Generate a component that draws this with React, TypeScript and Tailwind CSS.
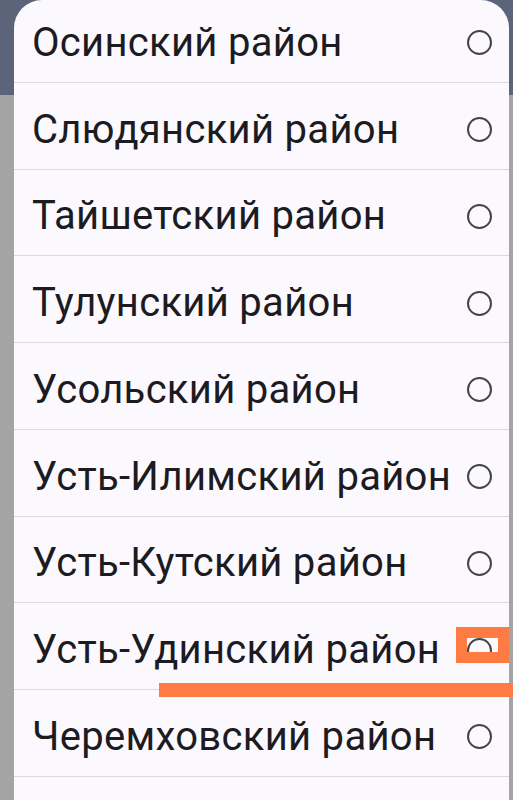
const districts = [
  'Осинский район',
  'Слюдянский район',
  'Тайшетский район',
  'Тулунский район',
  'Усольский район',
  'Усть-Илимский район',
  'Усть-Кутский район',
  'Усть-Удинский район',
  'Черемховский район',
]

function Radio() {
  return (
    <span className="block h-[25px] w-[25px] shrink-0 rounded-full border-[2.5px] border-[#45444c]" />
  )
}

export default function App() {
  return (
    <div
      className="relative h-[800px] w-[513px] overflow-hidden"
      style={{ fontFamily: 'Roboto, "Noto Sans", sans-serif' }}
    >
      {/* backdrop */}
      <div className="flex h-full flex-col">
        <div className="h-[95px] bg-[#5b6478]" />
        <div className="flex-1 bg-[#a4a4a4]" />
      </div>

      {/* dialog sheet */}
      <div className="absolute bottom-0 left-[14px] right-[4px] top-0 overflow-hidden rounded-t-[28px] bg-[#fbf8fe]">
        <ul className="-mt-[4px]">
          {districts.map((name) => (
            <li
              key={name}
              className="flex h-[86.75px] items-center justify-between border-b-[1.5px] border-[#dcd8de] pl-[18px] pr-[17px] pt-[8px]"
            >
              <span className="whitespace-nowrap text-[40px] font-normal leading-none tracking-[0.3px] text-[#1c1b1f]">
                {name}
              </span>
              <Radio />
            </li>
          ))}
        </ul>
      </div>

      {/* orange annotation marks */}
      <div className="absolute left-[456px] top-[627px] h-[36px] w-[53px] border-[11px] border-[#ff7b44]" />
      <div className="absolute left-[159px] top-[683px] h-[14px] w-[354px] bg-[#ff7b44]" />
    </div>
  )
}
